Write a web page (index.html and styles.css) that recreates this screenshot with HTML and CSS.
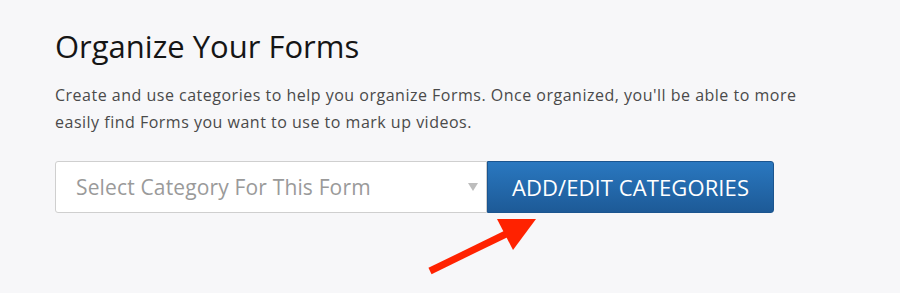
FILE: index.html
```html
<!DOCTYPE html>
<html>
<head>
<meta charset="utf-8">
<link rel="stylesheet" href="styles.css">
</head>
<body>
<div class="page">
  <h1 class="title">Organize Your Forms</h1>
  <p class="desc">Create and use categories to help you organize Forms. Once organized, you'll be able to more easily find Forms you want to use to mark up videos.</p>
  <div class="controls">
    <div class="select">
      <span class="placeholder">Select Category For This Form</span>
      <span class="caret"></span>
    </div>
    <button class="btn">ADD/EDIT CATEGORIES</button>
  </div>
  <svg class="arrow" width="120" height="70" viewBox="0 0 120 70" aria-hidden="true">
    <line x1="10" y1="66" x2="88" y2="28" stroke="#ff2200" stroke-width="7"/>
    <polygon points="77,14 116,14 93,45" fill="#ff2200"/>
  </svg>
</div>
</body>
</html>
```
FILE: styles.css
```css
html, body {
  margin: 0;
  padding: 0;
  background: #f7f7f9;
}
.page {
  position: relative;
  width: 900px;
  height: 293px;
  padding: 28px 0 0 55px;
  box-sizing: border-box;
  font-family: "Open Sans", Lato, sans-serif;
}
.title {
  margin: 0;
  font-weight: 400;
  font-size: 31px;
  line-height: 36px;
  color: #151515;
}
.desc {
  margin: 18px 0 0;
  width: 760px;
  font-size: 16px;
  letter-spacing: 0.5px;
  line-height: 27px;
  color: #4a4a4a;
}
.controls {
  display: flex;
  margin-top: 25px;
}
.select {
  width: 432px;
  height: 52px;
  box-sizing: border-box;
  border: 1px solid #cfcfcf;
  border-radius: 3px 0 0 3px;
  background: #fff;
  display: flex;
  align-items: center;
  justify-content: space-between;
  padding: 0 8px 0 20px;
}
.placeholder {
  font-size: 21px;
  letter-spacing: 0.15px;
  color: #9a9a9a;
}
.caret {
  width: 0;
  height: 0;
  border-left: 5px solid transparent;
  border-right: 5px solid transparent;
  border-top: 8px solid #bdbdbd;
}
.btn {
  width: 287px;
  height: 52px;
  border: 1px solid #1b558f;
  border-radius: 0 3px 3px 0;
  background: linear-gradient(#2a78c0, #1d5a97);
  color: #fff;
  font-family: "Open Sans", Lato, sans-serif;
  font-size: 22px;
  letter-spacing: 0.1px;
  padding: 0;
}
.arrow {
  position: absolute;
  left: 420px;
  top: 205px;
}
```
